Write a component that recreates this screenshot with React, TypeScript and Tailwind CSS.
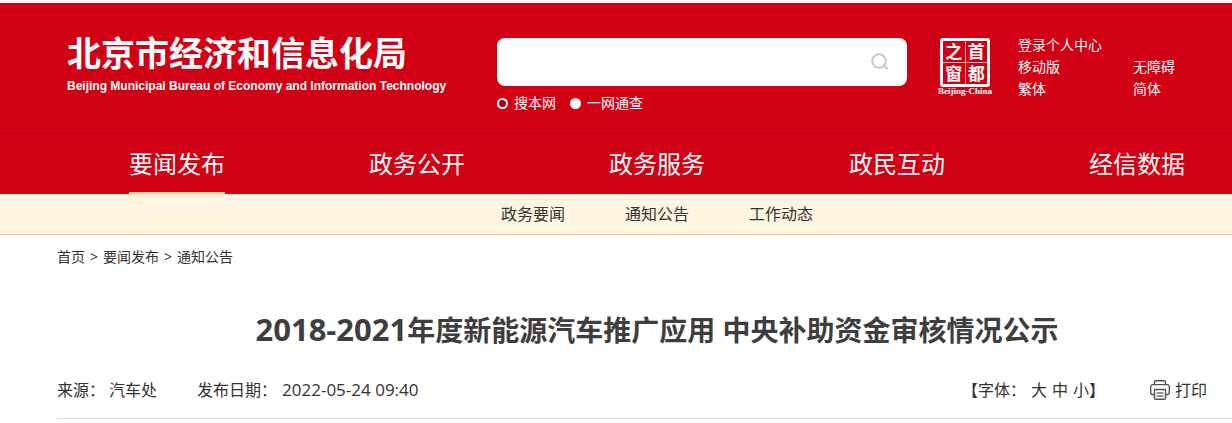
import React from "react";

const navItems = ["要闻发布", "政务公开", "政务服务", "政民互动", "经信数据"];
const subItems = ["政务要闻", "通知公告", "工作动态"];
const sealChars = ["之", "首", "窗", "都"];

function SearchIcon() {
  return (
    <svg viewBox="0 0 18 18" className="size-[18px]" fill="none" stroke="#c8c8c8" strokeWidth="2" aria-hidden="true">
      <circle cx="8" cy="8" r="6.8" />
      <path d="M12.6 12.6 L16.8 16.2" />
    </svg>
  );
}

function PrinterIcon() {
  return (
    <svg viewBox="0 0 20 20" className="size-5" fill="none" stroke="#555555" strokeWidth="1.4" strokeLinejoin="round" aria-hidden="true">
      <path d="M4.5 4.5V2Q4.5 0.7 6 0.7H14Q15.5 0.7 15.5 2V4.5" />
      <path d="M4.5 14.5H2.3Q0.7 14.5 0.7 12.8V6.4Q0.7 4.6 2.4 4.6H17.6Q19.3 4.6 19.3 6.4V12.8Q19.3 14.5 17.7 14.5H15.5" />
      <path d="M4.5 9.5H15.5V18Q15.5 19.3 14 19.3H6Q4.5 19.3 4.5 18Z" />
      <path d="M6.5 13H13.5M6.5 16H13.5" stroke="#777777" strokeWidth="1.6" />
    </svg>
  );
}

function Seal() {
  return (
    <a href="#capital" className="flex w-14 flex-col items-center">
      <span className="grid h-[49px] w-[50px] grid-cols-2 grid-rows-2 gap-px rounded-[3px] border-[3px] border-white bg-[#f2b3b9] text-white">
        {sealChars.map((c) => (
          <span key={c} className="flex items-center justify-center bg-[#d20014] text-[17px] leading-none font-bold">
            {c}
          </span>
        ))}
      </span>
      <span className="whitespace-nowrap font-['Liberation_Serif',serif] text-[9px] leading-[8px] font-bold">Beijing-China</span>
    </a>
  );
}

export default function App() {
  return (
    <div className="overflow-hidden bg-white pt-[3px] font-['Open_Sans','Noto_Sans_CJK_SC',sans-serif] text-[#333333]">
      <header className="bg-[#d20014] text-white">
        <div className="-mr-[25px] ml-[57px] flex h-[130px] items-start">
          <a href="#home" className="ml-[10px] mt-7 w-[430px] shrink-0 whitespace-nowrap">
            <span className="block text-[34px] leading-[44px] font-bold">北京市经济和信息化局</span>
            <span className="block font-['Liberation_Sans',sans-serif] text-xs leading-[22px] font-bold">
              Beijing Municipal Bureau of Economy and Information Technology
            </span>
          </a>
          <form className="mt-[35px] w-[410px] shrink-0" onSubmit={(e) => e.preventDefault()}>
            <div className="flex h-12 items-center rounded-lg bg-white pr-[18px]">
              <input type="text" aria-label="搜索" className="h-full min-w-0 flex-1 px-4 text-base text-[#333333] outline-none" />
              <button type="submit" aria-label="搜索">
                <SearchIcon />
              </button>
            </div>
            <div className="mt-[7px] flex gap-[14px] text-sm leading-5">
              <label className="flex items-center gap-[6px]">
                <input
                  type="radio"
                  name="scope"
                  defaultChecked
                  className="size-[11px] appearance-none rounded-full border-2 border-white bg-white checked:bg-[#a00010]"
                />
                搜本网
              </label>
              <label className="flex items-center gap-[6px]">
                <input
                  type="radio"
                  name="scope"
                  className="size-[11px] appearance-none rounded-full border-2 border-white bg-white checked:bg-[#a00010]"
                />
                一网通查
              </label>
            </div>
          </form>
          <div className="ml-[30px] mt-[35px] shrink-0">
            <Seal />
          </div>
          <div className="ml-[25px] mt-[31px] grid grid-cols-[115px_auto] text-sm leading-[22px]">
            <a href="#login" className="col-span-2">登录个人中心</a>
            <a href="#mobile">移动版</a>
            <a href="#accessible">无障碍</a>
            <a href="#traditional">繁体</a>
            <a href="#simplified">简体</a>
          </div>
        </div>
        <nav className="border-t border-[#a80012]">
          <ul className="-mr-[25px] ml-[57px] grid grid-cols-5">
            {navItems.map((item, i) => (
              <li key={item} className="flex justify-center">
                <a
                  href={`#nav${i}`}
                  className={
                    i === 0
                      ? "h-[60px] border-b-2 border-[#ffd08a] text-2xl leading-[60px]"
                      : "h-[60px] text-2xl leading-[60px]"
                  }
                >
                  {item}
                </a>
              </li>
            ))}
          </ul>
        </nav>
      </header>
      <nav className="border-b border-[#ffcc8a] bg-[#fff5e0]">
        <ul className="-mr-[25px] ml-[57px] flex justify-center gap-[60px] leading-10">
          {subItems.map((item, i) => (
            <li key={item}>
              <a href={`#sub${i}`}>{item}</a>
            </li>
          ))}
        </ul>
      </nav>
      <main className="-mr-[25px] ml-[57px]">
        <nav className="flex gap-[5px] pt-3 text-sm leading-5">
          <a href="#home">首页</a>
          <span>&gt;</span>
          <a href="#news">要闻发布</a>
          <span>&gt;</span>
          <a href="#notice">通知公告</a>
        </nav>
        <h1 className="mt-[42px] text-center text-[28px] leading-10 font-bold text-[#3e3e3e]">
          <span className="text-[31px]">2018-2021</span>年度新能源汽车推广应用 中央补助资金审核情况公示
        </h1>
        <div className="mt-3 flex h-[57px] items-center border-b border-[#dcdcdc] pr-[50px] leading-6">
          <span className="flex gap-1">
            <span>来源：</span>
            <span>汽车处</span>
          </span>
          <span className="ml-10 flex gap-[5px]">
            <span>发布日期：</span>
            <time dateTime="2022-05-24T09:40" className="text-[17px]">2022-05-24 09:40</time>
          </span>
          <div className="ml-auto flex items-center gap-[5px]">
            <span>【字体：</span>
            <button type="button">大</button>
            <button type="button">中</button>
            <span>
              <button type="button">小</button>】
            </span>
          </div>
          <button type="button" className="ml-[45px] flex items-center gap-[5px]">
            <PrinterIcon />
            打印
          </button>
        </div>
      </main>
    </div>
  );
}
